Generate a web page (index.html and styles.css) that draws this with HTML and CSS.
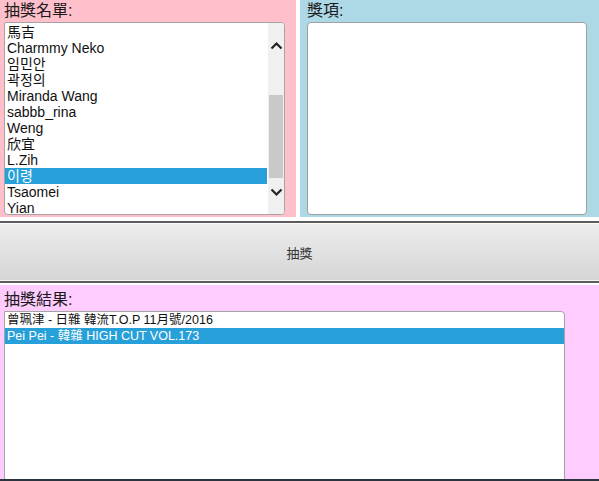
FILE: index.html
```html
<!DOCTYPE html>
<html lang="zh-Hant">
<head>
    <meta charset="UTF-8">
    <title>抽獎</title>
    <link rel="stylesheet" href="styles.css">
</head>
<body>
    <div class="top">
        <div class="panel pink">
            <div class="label">抽獎名單:</div>
            <div class="listbox names">
                <ul class="items">
                    <li>馬吉</li>
                    <li>Charmmy Neko</li>
                    <li>임민안</li>
                    <li>곽정의</li>
                    <li>Miranda Wang</li>
                    <li>sabbb_rina</li>
                    <li>Weng</li>
                    <li>欣宜</li>
                    <li>L.Zih</li>
                    <li class="selected">이령</li>
                    <li>Tsaomei</li>
                    <li>Yian</li>
                </ul>
                <div class="scrollbar">
                    <div class="track-top">
                        <svg width="13" height="9" viewBox="0 0 13 9"><path d="M1.5 7.5 L6.5 2.5 L11.5 7.5" fill="none" stroke="#222" stroke-width="2.2"/></svg>
                    </div>
                    <div class="thumb"></div>
                    <div class="track-bottom">
                        <svg width="13" height="9" viewBox="0 0 13 9"><path d="M1.5 1.5 L6.5 6.5 L11.5 1.5" fill="none" stroke="#222" stroke-width="2.2"/></svg>
                    </div>
                </div>
            </div>
        </div>
        <div class="panel blue">
            <div class="label">獎項:</div>
            <div class="textarea"></div>
        </div>
    </div>

    <div class="draw-btn">抽獎</div>

    <div class="panel lilac">
        <div class="label">抽獎結果:</div>
        <div class="listbox results">
            <ul class="items">
                <li>曾珮津 - 日雜 韓流T.O.P 11月號/2016</li>
                <li class="selected">Pei Pei - 韓雜 HIGH CUT VOL.173</li>
            </ul>
        </div>
    </div>
    <div class="taskbar"></div>
</body>
</html>
```

FILE: styles.css
```css
* {
    margin: 0;
    padding: 0;
    box-sizing: border-box;
}

body {
    background: #ffffff;
    font-family: "Liberation Sans", "Noto Sans CJK TC", Arial, sans-serif;
    color: #111;
    width: 599px;
    height: 481px;
    overflow: hidden;
}

.top {
    display: flex;
    gap: 4px;
    height: 217px;
}

.panel { padding: 0 4px; }
.pink { background: #ffc0cb; width: 296px; }
.blue { background: #add8e6; flex: 1; padding-left: 7px; }

.label {
    font-size: 16px;
    line-height: 22px;
    height: 22px;
    color: #1a1a1a;
}

.listbox {
    background: #fff;
    border: 1px solid #a4a4a4;
    border-radius: 2px 4px 4px 4px;
    display: flex;
    overflow: hidden;
}
.names { width: 281px; height: 193px; }

.items { list-style: none; flex: 1; padding-top: 1px; }
.items li {
    font-size: 14px;
    line-height: 16px;
    height: 16px;
    padding-left: 2px;
    white-space: nowrap;
}
.items li.selected { background: #279fd9; color: #fff; }

.scrollbar {
    width: 17px;
    display: flex;
    flex-direction: column;
    background: #f0f0f0;
    border-left: 1px solid #fff;
}
.track-top { height: 72px; display: flex; justify-content: center; padding-top: 18px; }
.thumb { height: 83px; background: #c9c9c9; margin: 0 1px; }
.track-bottom { flex: 1; display: flex; justify-content: center; padding-top: 10px; }

.textarea {
    width: 280px;
    height: 193px;
    background: #fff;
    border: 1px solid #a0a0a0;
    border-radius: 4px;
}

.draw-btn {
    margin-top: 4px;
    height: 62px;
    border-top: 2px solid #5c5c5c;
    border-bottom: 2px solid #5c5c5c;
    box-shadow: inset 0 1px 0 #fafafa, inset 0 -1px 0 #f4f4f4;
    background: linear-gradient(#ededed, #d5d5d5);
    display: flex;
    align-items: center;
    justify-content: center;
    font-size: 13px;
    color: #333;
}

.lilac {
    margin-top: 2px;
    background: #ffccff;
    height: 194px;
    padding-top: 3px;
    overflow: hidden;
}
.lilac .label { height: 23px; line-height: 23px; }
.results { width: 561px; height: 190px; border-radius: 0 4px 0 0; }
.results .items li { font-size: 12.5px; line-height: 15px; height: 15px; }
.results .items li.selected { height: 16px; line-height: 16px; }

.taskbar { height: 2px; background: #2a3540; }
```
